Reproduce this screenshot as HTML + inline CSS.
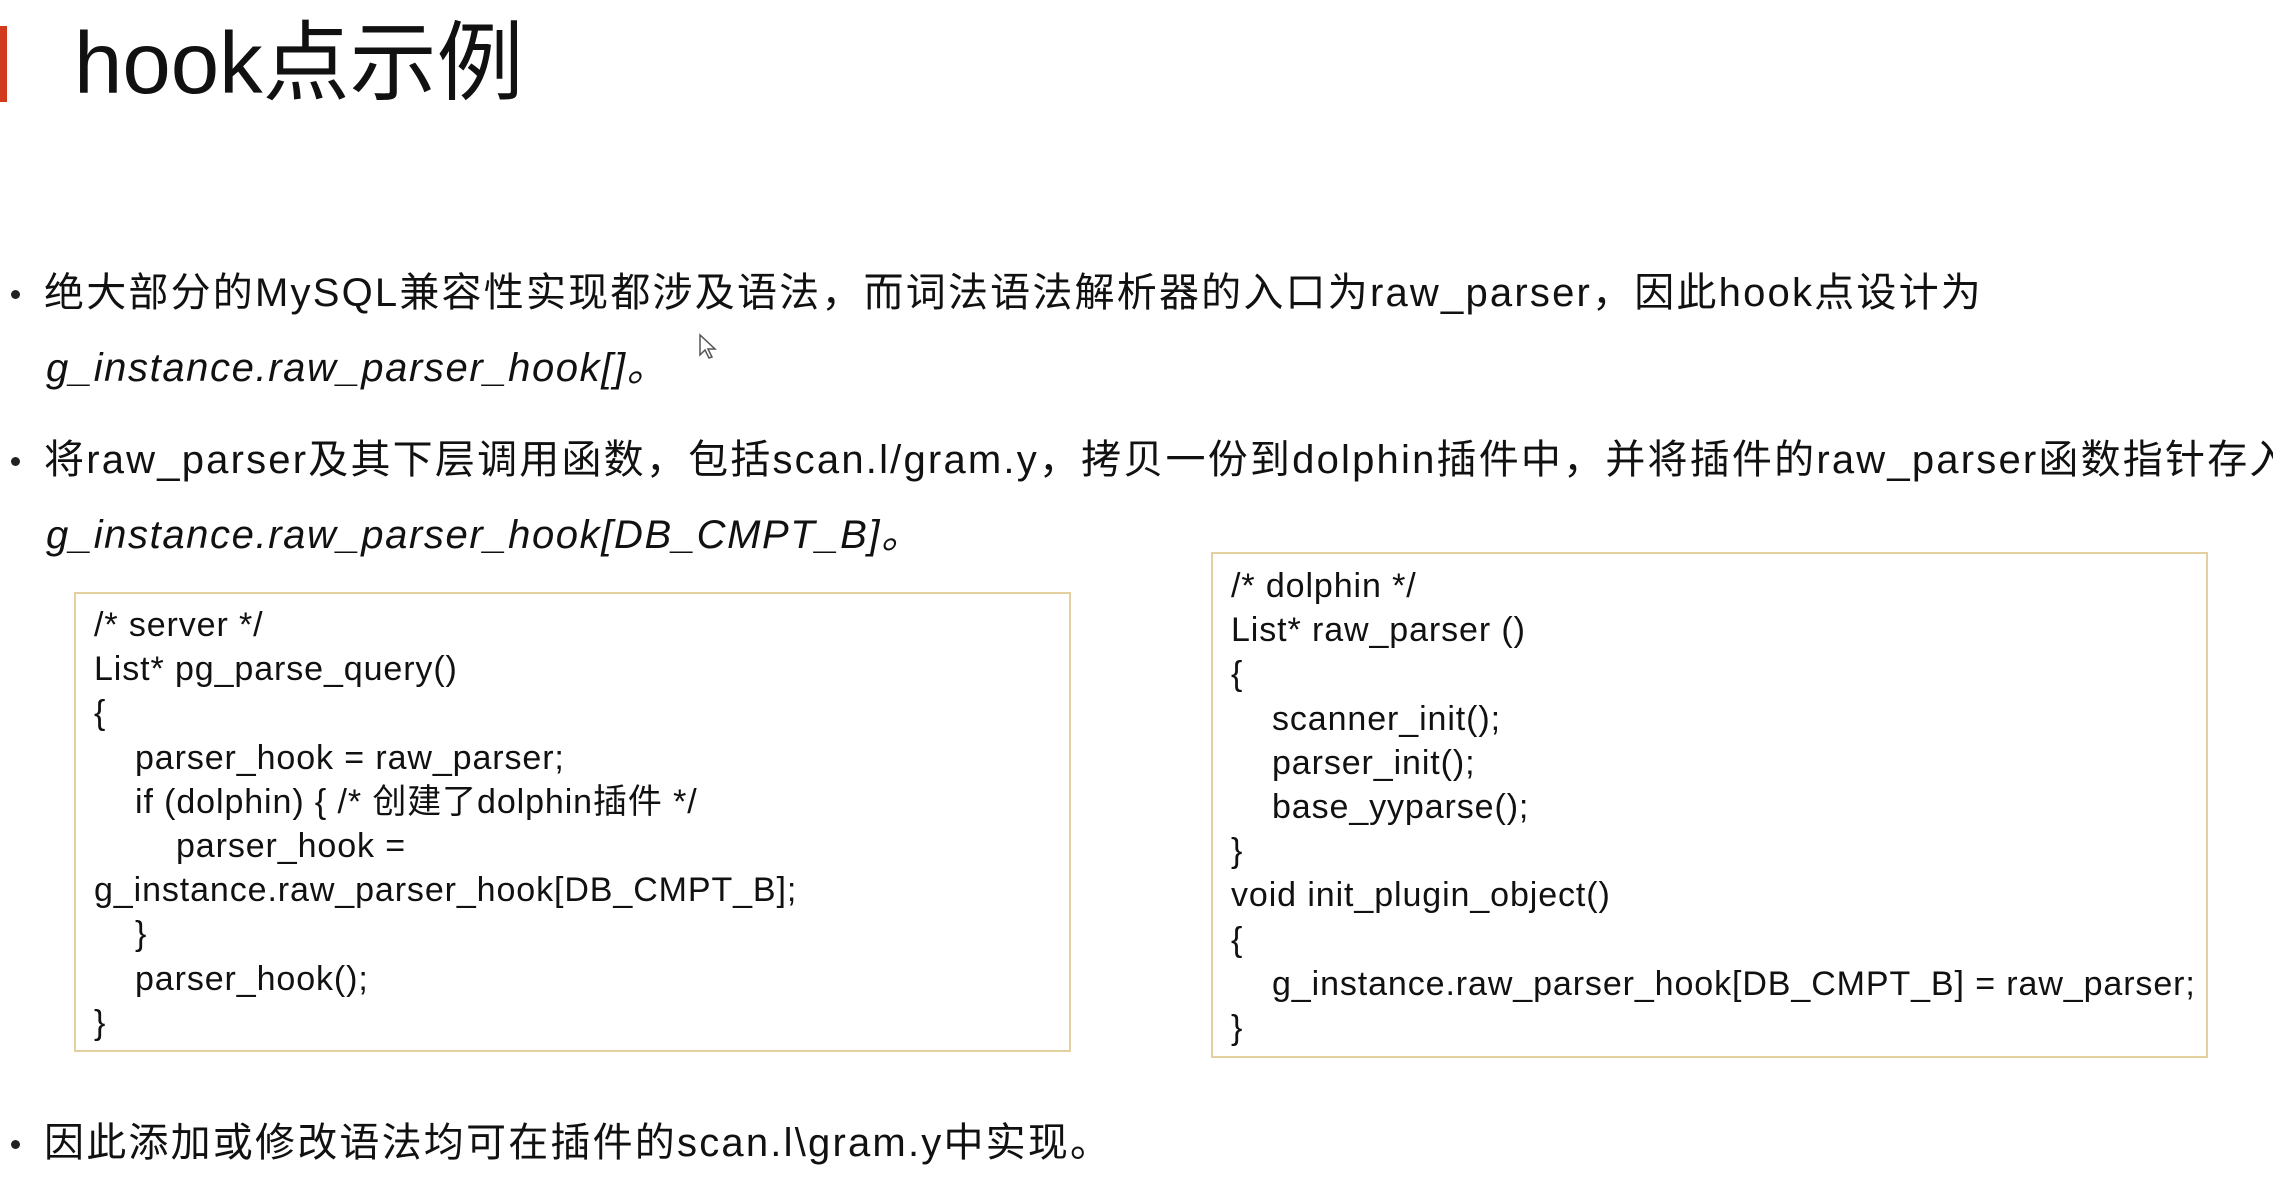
<!DOCTYPE html>
<html><head><meta charset="utf-8"><style>
html,body{margin:0;padding:0;background:#fff;width:2273px;height:1188px;overflow:hidden;position:relative}
body{font-family:"Liberation Sans","Noto Sans CJK SC",sans-serif;color:#111}
.abs{position:absolute;white-space:nowrap}
.bar{position:absolute;left:0;top:26px;width:7px;height:76px;background:#d23a1e}
.title{left:74px;top:4px;font-size:87px;line-height:120px;color:#111}
.t{font-size:40px;line-height:50px;letter-spacing:2.2px}
.i{font-style:italic;letter-spacing:1.6px}
.dot{position:absolute;width:9px;height:9px;border-radius:50%;background:#222}
.box{position:absolute;border:2px solid #e3cf9f;box-sizing:border-box}
.code{font-size:34px;line-height:44.2px;position:absolute;white-space:pre;letter-spacing:0.9px}
.code div{height:44.2px}
.l1{padding-left:41px}.l2{padding-left:82px}
</style></head><body>
<div class="bar"></div>
<div class="abs title">hook点示例</div>

<div class="dot" style="left:11px;top:290px"></div>
<div class="abs t" style="left:44px;top:268px">绝大部分的MySQL兼容性实现都涉及语法，而词法语法解析器的入口为raw_parser，因此hook点设计为</div>
<div class="abs t i" style="left:46px;top:343px">g_instance.raw_parser_hook[]。</div>

<div class="dot" style="left:11px;top:457px"></div>
<div class="abs t" style="left:44px;top:435px">将raw_parser及其下层调用函数，包括scan.l/gram.y，拷贝一份到dolphin插件中，并将插件的raw_parser函数指针存入</div>
<div class="abs t i" style="left:46px;top:510px">g_instance.raw_parser_hook[DB_CMPT_B]。</div>

<div class="box" style="left:74px;top:592px;width:997px;height:460px"></div>
<div class="code" style="left:94px;top:603px"><div>/* server */</div><div>List* pg_parse_query()</div><div>{</div><div class="l1">parser_hook = raw_parser;</div><div class="l1">if (dolphin) { /* 创建了dolphin插件 */</div><div class="l2">parser_hook =</div><div>g_instance.raw_parser_hook[DB_CMPT_B];</div><div class="l1">}</div><div class="l1">parser_hook();</div><div>}</div></div>

<div class="box" style="left:1211px;top:552px;width:997px;height:506px"></div>
<div class="code" style="left:1231px;top:564px"><div>/* dolphin */</div><div>List* raw_parser ()</div><div>{</div><div class="l1">scanner_init();</div><div class="l1">parser_init();</div><div class="l1">base_yyparse();</div><div>}</div><div>void init_plugin_object()</div><div>{</div><div class="l1">g_instance.raw_parser_hook[DB_CMPT_B] = raw_parser;</div><div>}</div></div>

<div class="dot" style="left:11px;top:1140px"></div>
<div class="abs t" style="left:44px;top:1118px">因此添加或修改语法均可在插件的scan.l\gram.y中实现。</div>

<svg class="abs" style="left:698px;top:333px" width="20" height="28" viewBox="0 0 20 28"><path d="M2 2 L2 22 L7 17 L11 25 L14 24 L10 16 L17 16 Z" fill="#fff" stroke="#555" stroke-width="1.5"/></svg>
</body></html>
